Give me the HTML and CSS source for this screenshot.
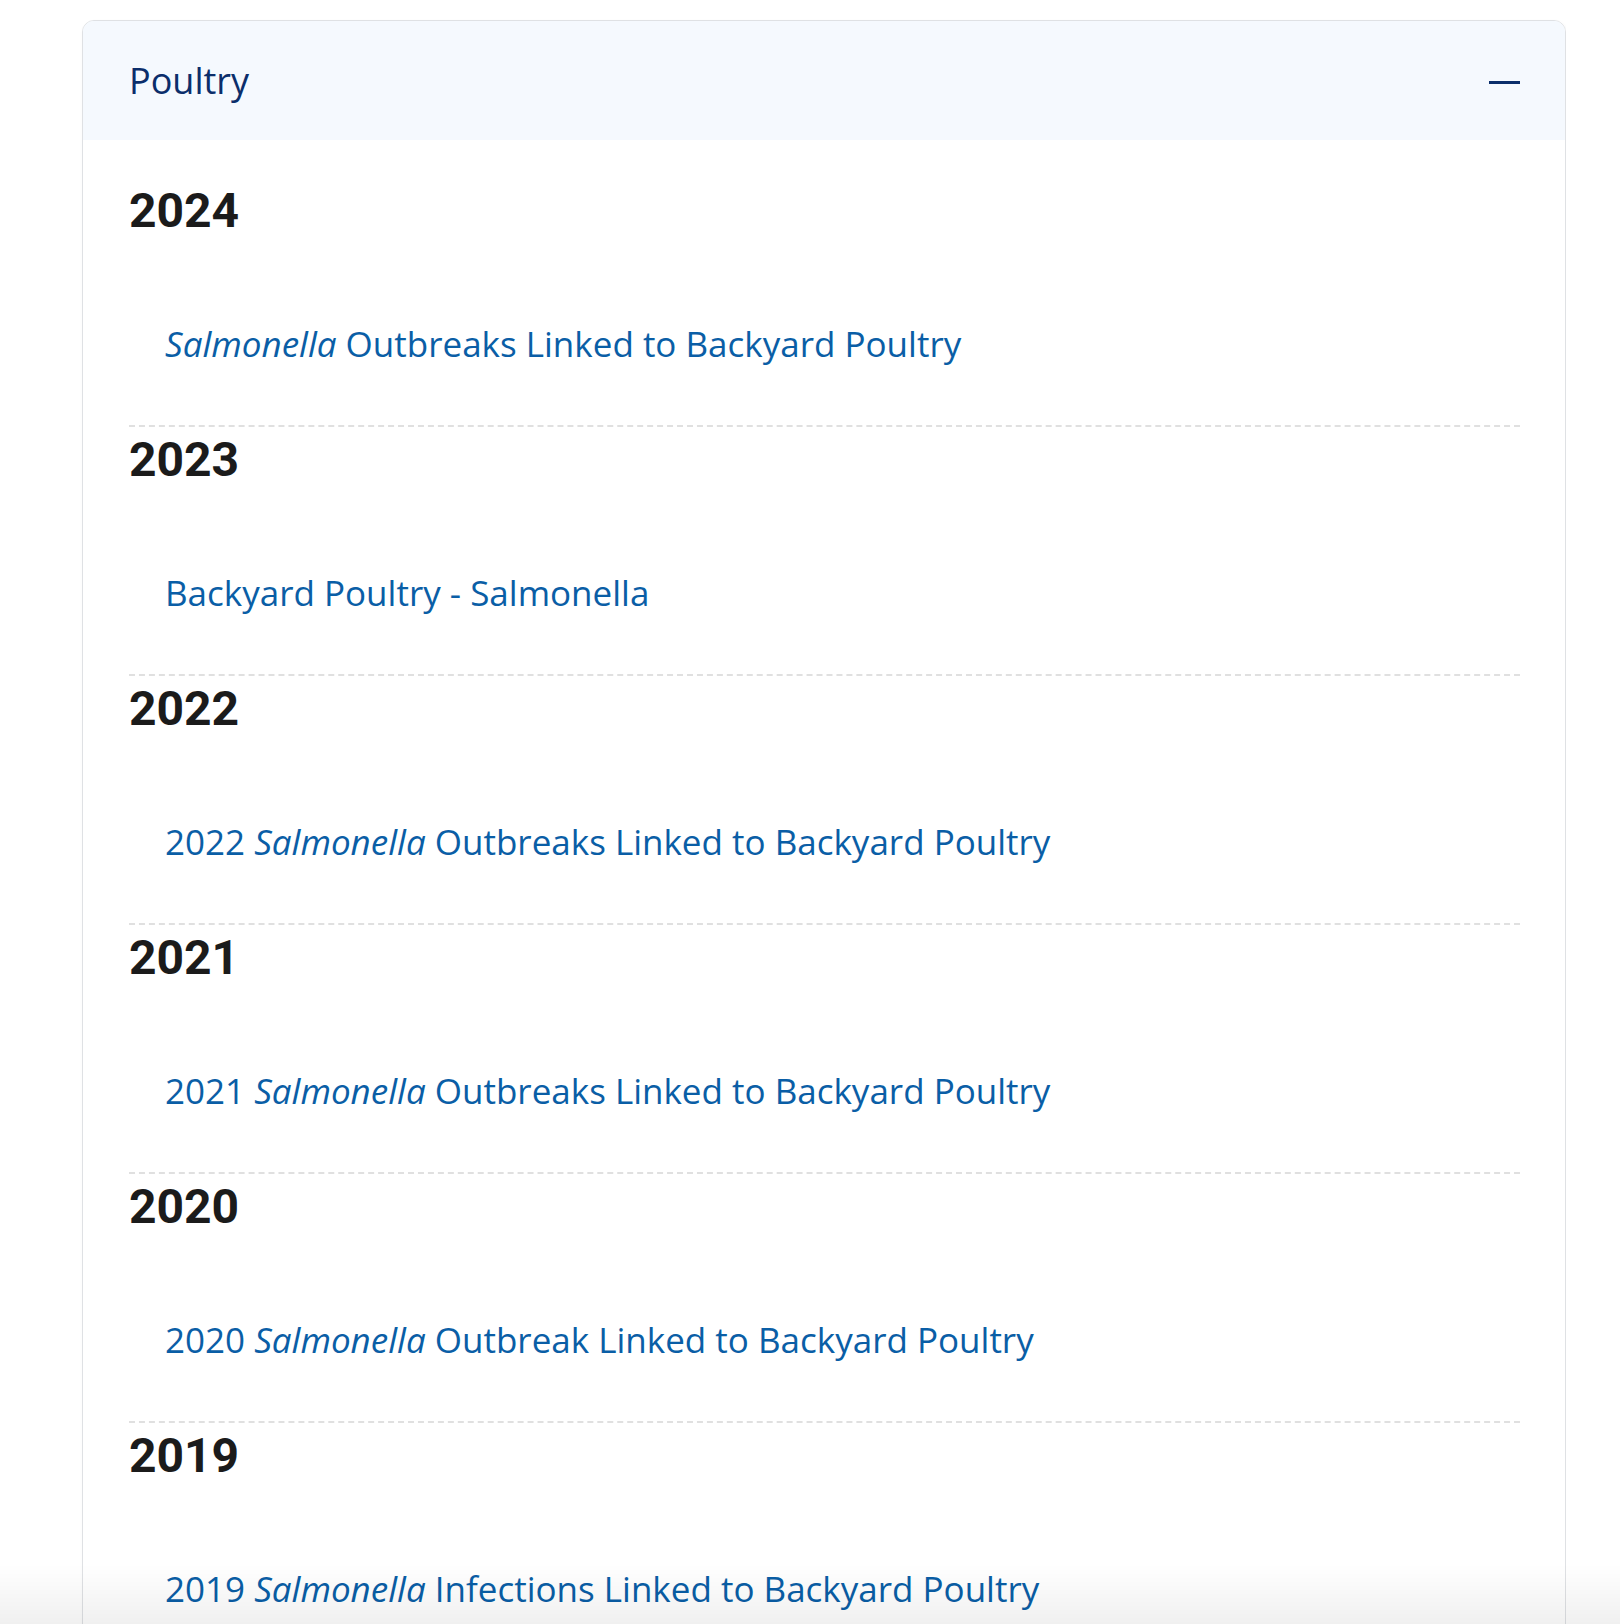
FILE: index.html
```html
<!DOCTYPE html>
<html lang="en">
<head>
<meta charset="utf-8">
<title>Poultry</title>
<link rel="stylesheet" href="styles.css">
</head>
<body>
<div class="card">
  <div class="card-header">
    <span class="card-title">Poultry</span>
    <span class="minus" aria-hidden="true"></span>
  </div>
  <div class="card-body">
    <section class="year first">
      <h3 class="year-title">2024</h3>
      <a class="year-link" href="#"><em>Salmonella</em> Outbreaks Linked to Backyard Poultry</a>
    </section>
    <section class="year">
      <h3 class="year-title">2023</h3>
      <a class="year-link" href="#">Backyard Poultry - Salmonella</a>
    </section>
    <section class="year">
      <h3 class="year-title">2022</h3>
      <a class="year-link" href="#">2022 <em>Salmonella</em> Outbreaks Linked to Backyard Poultry</a>
    </section>
    <section class="year">
      <h3 class="year-title">2021</h3>
      <a class="year-link" href="#">2021 <em>Salmonella</em> Outbreaks Linked to Backyard Poultry</a>
    </section>
    <section class="year">
      <h3 class="year-title">2020</h3>
      <a class="year-link" href="#">2020 <em>Salmonella</em> Outbreak Linked to Backyard Poultry</a>
    </section>
    <section class="year">
      <h3 class="year-title">2019</h3>
      <a class="year-link" href="#">2019 <em>Salmonella</em> Infections Linked to Backyard Poultry</a>
    </section>
  </div>
</div>
<div class="bottom-fade"></div>
</body>
</html>
```

FILE: styles.css
```css
html, body {
  margin: 0;
  padding: 0;
  background: #ffffff;
}

body {
  padding: 20px 0 0 82px;
  width: 1484px;
  height: 1604px;
  overflow: hidden;
  font-family: "Open Sans", "Noto Sans", sans-serif;
}

.card {
  border: 1px solid #dfe1e4;
  border-radius: 12px;
  overflow: hidden;
  box-shadow: 1px 2px 4px rgba(0, 0, 0, 0.04);
}

.card-header {
  height: 119px;
  background: #f5f9fe;
  display: flex;
  align-items: center;
  justify-content: space-between;
  padding: 0 45px 0 46px;
}

.card-title {
  font-size: 36px;
  color: #0b2e6b;
  line-height: 1;
}

.minus {
  display: block;
  width: 31px;
  height: 3px;
  background: #0b2e6b;
  margin-top: 4px;
}

.card-body {
  padding: 0 45px 0 46px;
}

.year {
  border-top: 2px dashed #e0e0e0;
  padding: 9px 0 54px;
}

.year.first {
  border-top: none;
  padding-top: 47px;
}

.year-title {
  margin: 0 0 82px;
  font-family: "Roboto", "Liberation Sans", sans-serif;
  font-weight: 700;
  font-size: 48px;
  line-height: 48px;
  color: #1b1b1b;
}

.year-link {
  display: block;
  padding-left: 36px;
  font-size: 35px;
  line-height: 54px;
  color: #0a5ea6;
  text-decoration: none;
}

.year-link em {
  font-style: italic;
}

.bottom-fade {
  position: fixed;
  left: 0;
  right: 0;
  bottom: 0;
  height: 60px;
  background: linear-gradient(to bottom, rgba(0, 0, 0, 0), rgba(0, 0, 0, 0.06));
  pointer-events: none;
}
```
